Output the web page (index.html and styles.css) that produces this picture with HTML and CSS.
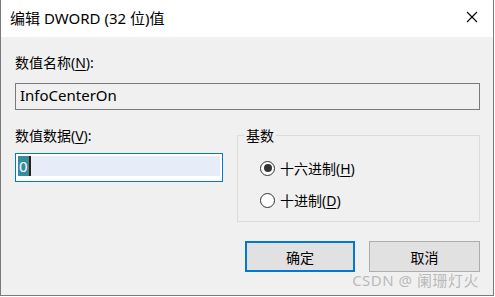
FILE: index.html
```html
<!DOCTYPE html>
<html lang="zh-CN">
<head>
  <meta charset="UTF-8">
  <title>编辑 DWORD (32 位)值</title>
  <link rel="stylesheet" href="styles.css">
</head>
<body>

  <div class="window">
    <div class="titlebar">
      <span class="title">编辑 DWORD (32 位)值</span>
      <svg class="close" width="12" height="12" viewBox="0 0 12 12">
        <path d="M1 1 L11 11 M11 1 L1 11" stroke="#000" stroke-width="1.1" fill="none"/>
      </svg>
    </div>

    <div class="content">
      <div class="label">数值名称(<u>N</u>):</div>
      <div class="namebox">InfoCenterOn</div>

      <div class="row">
        <div class="datacol">
          <div class="label">数值数据(<u>V</u>):</div>
          <div class="databox">
            <div class="datafill"><span class="sel">0</span><span class="caret"></span></div>
          </div>
        </div>

        <fieldset class="base">
          <legend>基数</legend>
          <div class="radio-row"><span class="radio checked"></span><span>十六进制(<u>H</u>)</span></div>
          <div class="radio-row"><span class="radio"></span><span>十进制(<u>D</u>)</span></div>
        </fieldset>
      </div>

      <div class="buttons">
        <button class="btn default">确定</button>
        <button class="btn">取消</button>
      </div>
    </div>

    <div class="watermark">CSDN @ 阑珊灯火</div>
  </div>

</body>
</html>
```

FILE: styles.css
```css
body {
  margin: 0;
  background: #fff;
  font-family: "Noto Sans", "Noto Sans CJK SC", sans-serif;
  color: #000;
}

.window {
  position: relative;
  width: 494px;
  height: 296px;
  box-sizing: border-box;
  border: 1px solid #7a7a7a;
  border-top: none;
  background: #f0f0f0;
  display: flex;
  flex-direction: column;
}

.titlebar {
  height: 37px;
  background: #fff;
  display: flex;
  align-items: center;
  justify-content: space-between;
  padding: 0 15px 0 9px;
}

.title {
  font-size: 15px;
  margin-top: -2px;
}

.close {
  margin-top: -3px;
}

.content {
  padding: 0 13px 0 14px;
}

.label {
  font-size: 14px;
  line-height: 18px;
  margin-top: 17px;
}

u {
  text-decoration-thickness: 1px;
  text-underline-offset: 2px;
}

.namebox {
  margin-top: 11px;
  height: 27px;
  box-sizing: border-box;
  border: 1px solid #7a7a7a;
  padding: 0 4px;
  font-size: 15px;
  line-height: 23px;
}

.row {
  display: grid;
  grid-template-columns: 208px 243px;
  column-gap: 14px;
  align-items: start;
}

.databox {
  margin-top: 8px;
  width: 208px;
  height: 29px;
  box-sizing: border-box;
  border: 1px solid #0078d7;
  background: #fff;
  padding: 2px 2px 5px 2px;
}

.datafill {
  height: 20px;
  background: #e6edf8;
  display: flex;
  align-items: stretch;
}

.sel {
  background: #358c9e;
  color: #fff;
  font-size: 15px;
  line-height: 20px;
  padding: 0 1px 0 1px;
}

.caret {
  width: 2px;
  background: #3a1a12;
}

.base {
  margin: 17px 0 0 0;
  padding: 8px 0 0 6px;
  border: 1px solid #dcdcdc;
  height: 95px;
  box-sizing: border-box;
}

.base legend {
  font-size: 14px;
  line-height: 17px;
  padding: 0 2px;
  margin-left: 0;
}

.radio-row {
  display: flex;
  align-items: center;
  gap: 5px;
  font-size: 14px;
  height: 32px;
  padding-left: 16px;
}

.radio {
  width: 15px;
  height: 15px;
  box-sizing: border-box;
  border: 1px solid #333;
  border-radius: 50%;
  background: #fff;
  display: flex;
  align-items: center;
  justify-content: center;
}

.radio.checked {
  border-width: 1.5px;
}

.radio.checked::after {
  content: "";
  width: 8px;
  height: 8px;
  border-radius: 50%;
  background: #333;
}

.buttons {
  display: flex;
  justify-content: flex-end;
  gap: 14px;
  margin-top: 19px;
}

.btn {
  width: 111px;
  height: 31px;
  box-sizing: border-box;
  background: #e1e1e1;
  border: 1px solid #adadad;
  font-family: inherit;
  font-size: 14px;
  color: #000;
  padding: 0;
}

.btn.default {
  width: 110px;
  border: 2px solid #0078d7;
}

.watermark {
  position: absolute;
  right: 14px;
  bottom: 5px;
  font-size: 15px;
  color: rgba(160, 160, 160, 0.7);
  letter-spacing: 0.5px;
}
```
